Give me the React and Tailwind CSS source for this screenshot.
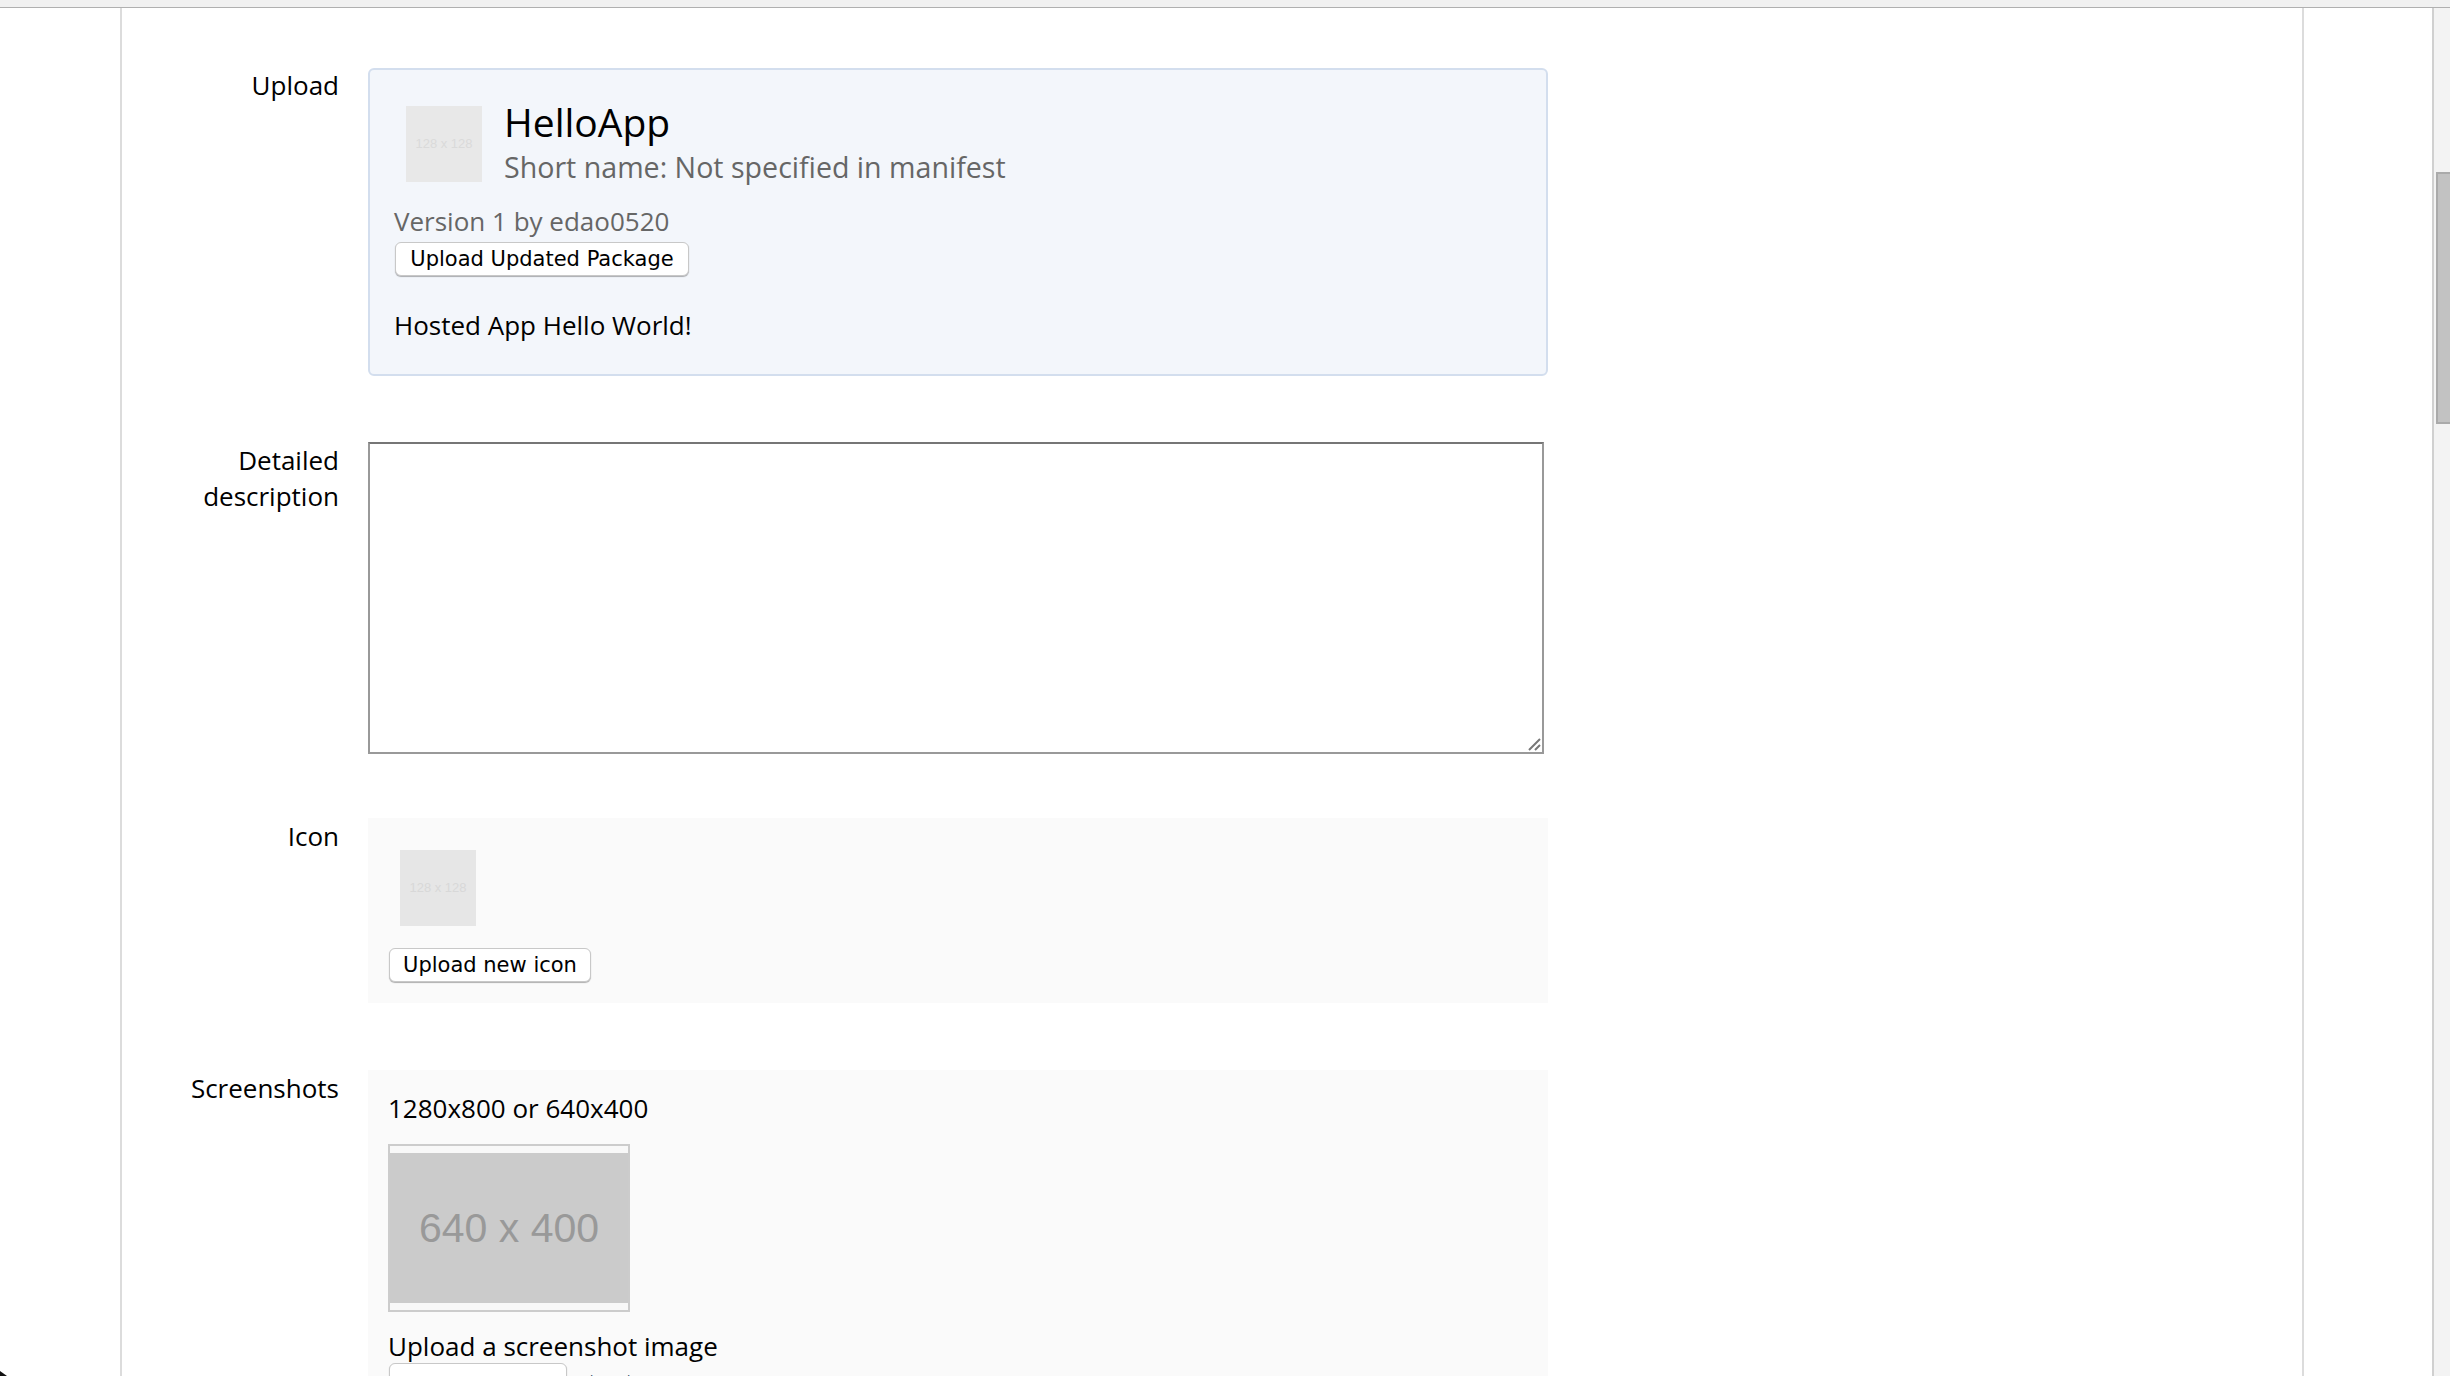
export default function App() {
  const font = "[font-family:'Open_Sans',sans-serif]";
  const btn = "block bg-white border border-[#c8c8c8] rounded-[6px] shadow-[0_1px_1px_rgba(0,0,0,0.3)] text-black text-[21px] leading-none pt-px [font-family:'DejaVu_Sans',sans-serif] text-center";
  const label = "w-[217px] shrink-0 text-right text-[26px] leading-[36px] text-black mr-[29px]";
  return (
    <div className={`h-screen w-full overflow-hidden bg-white flex flex-col relative ${font}`}>
      <div className="h-[8px] shrink-0 bg-[#f1f1f1] border-b border-[#b0b0b0]" />
      <div className="flex flex-1 min-h-0">
        <div className="w-[120px] shrink-0" />
        <main className="w-[2184px] shrink-0 border-x-2 border-[#dcdcdc] pt-[60px]">
          <div className="flex">
            <div className={`${label} -mt-px`}>Upload</div>
            <section className="w-[1180px] h-[308px] border-2 border-[#d3deee] rounded-[6px] bg-[#f3f6fb] flex flex-col">
              <div className="flex pl-[36px] pt-[36px]">
                <div className="w-[76px] h-[76px] bg-[#e8e8e8] flex items-center justify-center text-[13px] text-[#dadada] [font-family:'Liberation_Sans',sans-serif]">128 x 128</div>
                <div className="ml-[22px] -mt-[9px]">
                  <div className="text-[39px] leading-[50px] text-black">HelloApp</div>
                  <div className="text-[28.6px] leading-[40px] text-[#666666]">Short name: Not specified in manifest</div>
                </div>
              </div>
              <div className="pl-[24px] mt-[16px] text-[26px] leading-[36px] text-[#666666]">Version 1 by edao0520</div>
              <button className={`${btn} ml-[25px] mt-[3px] w-[294px] h-[34px]`}>Upload Updated Package</button>
              <div className="pl-[24px] mt-[31px] text-[26px] leading-[36px] text-black">Hosted App Hello World!</div>
            </section>
          </div>
          <div className="flex mt-[66px]">
            <div className={label}>Detailed<br />description</div>
            <div className="w-[1176px] h-[312px] relative bg-white border-2 border-[#999999] border-t-[#767676]">
              <svg className="absolute right-0 bottom-0" width="14" height="14" viewBox="0 0 14 14">
                <path d="M1 12L12 1M7 12L12 7" stroke="#777777" strokeWidth="2" fill="none" />
              </svg>
            </div>
          </div>
          <div className="flex mt-[64px]">
            <div className={label}>Icon</div>
            <section className="w-[1180px] h-[185px] bg-[#fafafa] pt-[32px] pl-[21px]">
              <div className="ml-[11px] w-[76px] h-[76px] bg-[#e6e6e6] flex items-center justify-center text-[13px] text-[#d8d8d8] [font-family:'Liberation_Sans',sans-serif]">128 x 128</div>
              <button className={`${btn} mt-[22px] w-[202px] h-[34px]`}>Upload new icon</button>
            </section>
          </div>
          <div className="flex mt-[67px]">
            <div className={label}>Screenshots</div>
            <section className="w-[1180px] h-[400px] bg-[#fafafa] pl-[20px] pt-[20px]">
              <div className="text-[26px] leading-[36px] text-black">1280x800 or 640x400</div>
              <div className="mt-[18px] w-[242px] h-[168px] border-2 border-[#cccccc] bg-[#f8f8f8] flex items-center">
                <div className="w-full h-[150px] pt-[2px] bg-[#cbcbcb] flex items-center justify-center text-[41px] text-[#999999] [font-family:'Liberation_Sans',sans-serif]">640 x 400</div>
              </div>
              <div className="mt-[16px] text-[26px] leading-[36px] text-black">Upload a screenshot image</div>
              <div className="flex items-start -mt-[1px]">
                <button className={`${btn} ml-px w-[178px] h-[46px]`}>Choose File</button>
                <span className="ml-[11px] mt-[7px] text-[13px] text-[#334466] leading-[20px]">What's this?</span>
              </div>
            </section>
          </div>
        </main>
        <div className="w-[128px] shrink-0" />
        <div className="w-[18px] shrink-0 border-l-2 border-[#d0d0d0] bg-[#f3f3f3] pl-[2px] pt-[164px]">
          <div className="h-[252px] bg-[#c2c2c2] border-2 border-r-0 border-[#aaaaaa]" />
        </div>
      </div>
      <svg className="absolute left-0 bottom-0" width="8" height="5" viewBox="0 0 8 5">
        <path d="M0 0L7 5H0Z" fill="#111111" />
      </svg>
    </div>
  );
}
